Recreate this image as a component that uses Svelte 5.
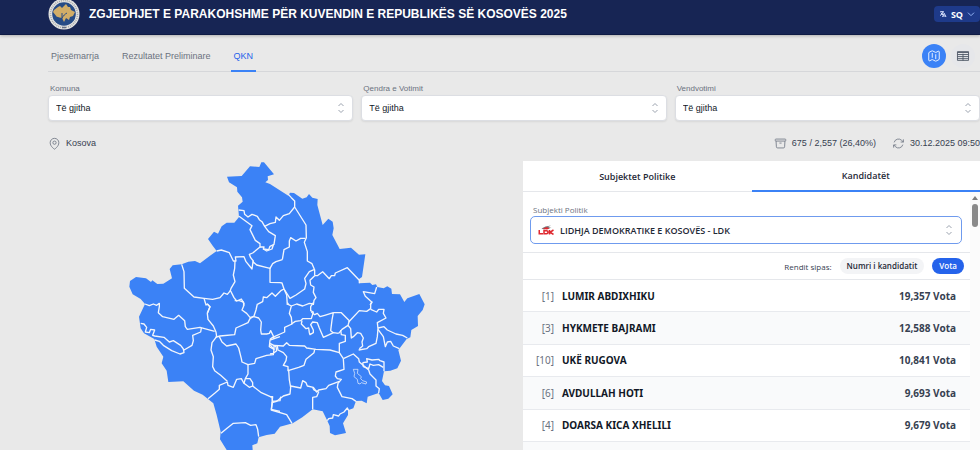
<script>
  const filters = [
    { id: 'komuna', label: 'Komuna' },
    { id: 'qendra', label: 'Qendra e Votimit' },
    { id: 'vendvotimi', label: 'Vendvotimi' },
  ];

  const candidates = [
    { no: 1, name: 'LUMIR ABDIXHIKU', votes: 19357 },
    { no: 3, name: 'HYKMETE BAJRAMI', votes: 12588 },
    { no: 10, name: 'UKË RUGOVA', votes: 10841 },
    { no: 6, name: 'AVDULLAH HOTI', votes: 9693 },
    { no: 4, name: 'DOARSA KICA XHELILI', votes: 9679 },
  ];

  let sortBy = $state('votes');

  const sorted = $derived(
    [...candidates].sort((a, b) => (sortBy === 'votes' ? b.votes - a.votes : a.no - b.no))
  );

  const outline =
    'M424 22L432 22L462 58L443 64L444 75L436 82L450 87L505 122L510 113L522 114L547 131L560 127L567 117L577 128L593 132L592 150L608 210L625 191L638 200L641 220L637 240L659 282L693 278L717 299L736 298L726 366L716 373L718 385L750 383L757 390L768 388L772 396L791 400L802 394L814 401L816 417L840 418L853 441L862 430L898 417L914 448L908 465L893 483L894 513L874 525L871 547L860 552L835 585L843 617L832 640L811 647L792 649L786 678L795 691L807 693L818 718L805 731L788 735L776 714L743 725L740 745L725 737L708 738L700 760L684 766L684 780L669 805L678 834L667 836L645 841L630 834L629 813L622 797L608 769L578 763L547 787L518 805L480 815L464 836L440 840L416 847L412 865L397 871L398 885L390 920L330 920L320 885L300 853L302 830L290 780L280 745L264 732L248 719L222 707L190 679L145 681L140 647L125 625L130 605L110 575L103 552L72 535L62 520L57 485L75 447L62 432L38 418L28 395L30 378L48 366L78 370L93 381L97 376L112 387L130 386L156 370L149 342L158 331L185 328L205 320L225 318L240 325L270 302L290 288L278 272L264 252L282 230L294 236L305 214L320 203L343 203L357 186L354 152L368 140L366 127L352 110L351 97L327 82L321 65L365 63L390 34L418 36Z';

  // municipal borders, one set of lines per quarter of the map
  const borders = [
    {
      x: 0,
      y: 0,
      lines: [
        '356,165 372,167 374,178 384,186 396,178 412,184 418,194 426,200 434,214 450,206 466,202 468,186 478,196 490,182 508,176 524,156',
        '357,184 396,212 390,224 406,256 420,266 420,276 398,294 388,298 392,308 400,318 399,322',
        '434,214 446,230 466,242 462,268 450,274 446,284 430,282 432,276 420,276',
        '430,282 440,288 456,282 460,270',
        '290,288 304,285 328,293 340,318 348,318 346,306 372,305 378,320 396,342 399,320 410,330 438,337 450,340 458,326 468,320 487,314',
        '345,318 344,340 340,360 345,380 333,400 330,410',
        '185,328 192,350 193,400 222,426 252,430 278,433 300,428 312,414 322,418 332,406',
        '252,430 258,450 262,447 270,455 262,475',
        '332,408 342,428 350,438 364,432 372,445 370,452',
        '450,338 450,382 480,383 486,384 492,402 484,406 466,424 456,414 440,428 430,426 428,440 412,448',
      ],
    },
    {
      x: 450,
      y: 0,
      lines: [
        '55,118 64,128 74,138 74,156 108,210 109,248 103,262 112,290 112,318 126,326 134,345 134,362',
        '106,250 92,250 78,258 62,248 58,258 58,276 42,284 37,314',
        '134,362 142,362 158,350 178,371 184,362 194,362 196,354 232,338 268,376 268,385',
        '42,402 60,430 78,420 104,402 108,386 104,370 118,350 132,344',
        '134,362 120,376 122,390 132,396 130,412 138,428 132,436 130,450',
        '42,402 50,420 52,450',
        '320,396 314,416 280,410 286,424 306,442 300,450',
      ],
    },
    {
      x: 0,
      y: 435,
      lines: [
        '75,12 88,17 100,12 110,16 118,10 118,20 115,38 128,50 162,58 176,46 194,62 196,80 202,88 240,82 284,94',
        '262,12 270,20 262,40 264,58 280,78 288,96 290,110 276,128 273,150 280,170 278,200 284,212 302,226 322,244',
        '244,84 242,96 218,106 220,122 216,136 192,150 188,144 182,136 160,122 148,126 132,112 104,108 98,106 104,90 92,88 88,98 76,96 80,82 72,72 62,70',
        '104,120 118,124 130,136 155,152 180,162 192,158 190,146',
        '264,296 284,280 298,268 298,256 322,246 324,256 340,262 350,238 364,236 372,250 388,262 398,258 424,278 456,292 458,304 480,302 482,290',
        '286,112 300,108 344,104 348,84 384,68 390,56 402,48 408,30 412,12',
        '402,50 390,52 380,40 366,30 372,16 370,6 358,2 344,2',
        '298,110 306,126 320,138 348,132 356,144 364,176 366,186 384,194 404,190 408,176 440,166 460,164 462,148 448,140 450,120 480,110',
        '384,194 384,222 376,236 372,250',
        '378,236 390,236 398,248 398,258',
        '402,50 416,54 424,66 422,90 424,102 440,102 448,100 452,92 460,108 462,116',
        '303,400 322,384 340,370 376,368 392,376 408,374 413,388 416,410',
        '458,304 454,328 480,334',
      ],
    },
    {
      x: 450,
      y: 435,
      lines: [
        '52,8 56,14 64,18 58,40 64,52 66,72 44,82 44,96 8,112 0,118',
        '64,18 80,12 98,18 118,10 130,12',
        '64,72 76,64 92,62 98,56 124,56 130,36 122,32 122,20 130,8',
        '96,62 94,72 108,86 116,84 118,98 120,104 130,98 130,90 122,74 128,66 142,68 148,84 160,112 178,104 190,98 206,100',
        '124,36 134,44 142,40 150,50 164,46 190,38 186,60 182,92 190,98',
        '190,38 214,38 238,62 234,76 216,88 206,100',
        '236,66 268,32 290,34 302,26 302,12 306,4',
        '302,28 320,36 326,28 342,28 340,40 348,54 322,68 324,86 322,110 318,130 296,140 290,146 266,150',
        '234,76 242,86 244,114 250,110 262,98 272,100 280,114 276,126 278,138 268,146',
        '212,90 214,104 226,106 226,124 208,130 208,158 220,176',
        '324,84 342,80 352,90 378,102 398,106 412,114',
        '324,88 340,110 346,140 352,126 362,124 370,138 388,146',
        '0,134 12,148 12,136 40,138 50,128 58,136 104,138 110,144 138,148 180,150 208,158',
        '22,138 24,150 40,158 50,170 48,182 40,196 54,200 54,212 86,202 102,196 108,178 132,158 134,148',
        '0,130 18,140 20,152 10,160 0,162',
        '56,210 58,240 62,262 60,282 40,288 20,304 6,308 4,330 50,344 66,370',
        '62,258 92,264 98,242 108,248 112,258 130,262 140,276 146,270 168,266 176,256 208,244',
        '0,290 8,290 6,308',
        '220,176 222,208 198,216 196,228 202,236 214,238 204,250 202,262 216,290 246,296 258,304',
        '220,176 250,162 266,176 268,186 296,210 300,222 318,240 318,258 328,266 326,279',
        '278,188 292,186 290,176 306,180 326,178 330,182 342,186 342,214',
        '278,188 280,200 296,206 300,192 310,196 326,194 340,202',
        '128,262 132,270 146,276 140,290 128,292 128,328',
        '172,362 176,356 188,354 190,344 206,348 210,342 222,336 232,324 236,332',
      ],
    },
  ];
</script>

{#snippet updown()}
  <svg class="updown" viewBox="0 0 10 12" aria-hidden="true">
    <path d="M2.5 4L5 1.5L7.5 4M2.5 8L5 10.5L7.5 8" />
  </svg>
{/snippet}

<div class="page">
  <header class="topbar">
    <div class="topbar-row">
      <svg class="seal" viewBox="0 0 32 32" aria-hidden="true">
        <circle cx="16" cy="16" r="15.5" fill="#e4e4e2" />
        <circle cx="16" cy="16" r="13.5" fill="none" stroke="#a5a7ab" stroke-width="1.6" stroke-dasharray="1 1" />
        <circle cx="16" cy="16" r="11.8" fill="#264b86" />
        <path
          d="M6 12L10 9L12 8L14 10L18 6L20 9L22 9L23 12L27 14L25 18L22 19L21 22L18 20L16 24L14 20L9 19L5 14Z"
          fill="#d2ad67"
        />
        <path d="M13 27C12 22 15 17 19 15M13 22L9 19M14 20L14 15" fill="none" stroke="#264b86" />
        <path d="M14 29.5H18" stroke="#667188" stroke-width="1.5" />
      </svg>
      <h1>ZGJEDHJET E PARAKOHSHME PËR KUVENDIN E REPUBLIKËS SË KOSOVËS 2025</h1>
      <button class="lang" type="button">
        <svg class="lang-icon" viewBox="0 0 24 24" aria-hidden="true">
          <path d="M10.5 21l5.2-11.2L21 21M12 18h7.5M3 5.6a48 48 0 0 1 12 0M9 5.2V3M12.4 5.5A18 18 0 0 1 3 16.5M6.5 9a18 18 0 0 0 5.5 6" />
        </svg>
        SQ
        <svg class="lang-arrow" viewBox="0 0 24 24" aria-hidden="true"><path d="m3 8 9 9 9-9" /></svg>
      </button>
    </div>
  </header>

  <main>
    <div class="nav-row">
      <nav>
        <a href="#pjesemarrja">Pjesëmarrja</a>
        <a href="#rezultatet">Rezultatet Preliminare</a>
        <a class="active" href="#qkn">QKN</a>
      </nav>
      <div class="views">
        <button class="view on" type="button" aria-label="Harta">
          <svg viewBox="0 0 24 24" aria-hidden="true">
            <path
              d="M9 6.75V15m6-6v8.25m.5 3.5 4.9-2.44c.38-.19.6-.57.6-1V4.8c0-.83-.88-1.38-1.63-1L15.5 5.75c-.3.16-.68.16-1 0L9.5 3.25a1.1 1.1 0 0 0-1 0L3.6 5.7c-.38.18-.6.57-.6 1V19.2c0 .83.88 1.37 1.63 1l3.87-1.95c.3-.16.68-.16 1 0l5 2.5c.3.15.68.15 1 0Z"
            />
          </svg>
        </button>
        <button class="view" type="button" aria-label="Tabela">
          <svg viewBox="0 0 24 24" aria-hidden="true">
            <path d="M2.5 4.5h19v15h-19ZM2.5 6h19M2.5 9.5h19M2.5 13h19M2.5 16.5h19M12 8v12" />
          </svg>
        </button>
      </div>
    </div>

    <div class="filters">
      {#each filters as f}
        <div class="filter">
          <label for={f.id}>{f.label}</label>
          <div class="select-box">
            <select id={f.id}>
              <option>Të gjitha</option>
            </select>
            {@render updown()}
          </div>
        </div>
      {/each}
    </div>

    <div class="status">
      <span class="status-item place">
        <svg viewBox="0 0 24 24" aria-hidden="true">
          <path d="M15 10.5a3 3 0 1 1-6 0 3 3 0 0 1 6 0Z" />
          <path d="M20 10.5c0 7.1-8 12-8 12s-8-4.9-8-12a8 8 0 0 1 16 0Z" />
        </svg>
        Kosova
      </span>
      <span class="status-item">
        <svg viewBox="0 0 24 24" aria-hidden="true">
          <path d="m20.2 7.5-.6 10.6a2.2 2.2 0 0 1-2.3 2.1H6.7a2.2 2.2 0 0 1-2.3-2.1L3.8 7.5M10 11.2h4M3.4 7.5h17.2c.6 0 1.1-.5 1.1-1.1V4.9c0-.6-.5-1.1-1.1-1.1H3.4c-.6 0-1.1.5-1.1 1.1v1.5c0 .6.5 1.1 1.1 1.1Z" />
        </svg>
        675 / 2,557 (26,40%)
      </span>
      <span class="status-item">
        <svg viewBox="0 0 24 24" aria-hidden="true">
          <path d="M16 9.3h5V4.4M3 19.6v-5h5M3 14.6l3.2 3.2a8.2 8.2 0 0 0 13.8-3.7M4 9.9A8.2 8.2 0 0 1 17.8 6.2L21 9.3" />
        </svg>
        30.12.2025 09:50
      </span>
    </div>

    <div class="results">
      <svg class="map" viewBox="-216 18 1371 900" role="img" aria-label="Kosova">
        <path class="land" d={outline} />
        {#each borders as part}
          <g transform="translate({part.x} {part.y})">
            {#each part.lines as line}
              <polyline class="border" points={line} />
            {/each}
          </g>
        {/each}
        <polygon
          class="border thin"
          points="700,643 714,643 712,655 724,665 722,671 728,677 740,681 738,687 724,683 720,687 714,685 712,673 702,665 704,655"
        />
      </svg>

      <section class="panel">
        <div class="panel-tabs" role="tablist">
          <button type="button" role="tab" aria-selected="false">Subjektet Politike</button>
          <button class="active" type="button" role="tab" aria-selected="true">Kandidatët</button>
        </div>
        <div class="panel-body">
          <div class="panel-content">
            <div class="party">
              <label for="party">Subjekti Politik</label>
              <div class="party-box">
                <svg class="ldk" viewBox="0 0 32 20" aria-hidden="true">
                  <path d="M7 7L15 3L26 1L20 4L27 5L21 6L25 8L17 7L12 9Z" fill="#77777b" />
                  <path d="M9 8L17 4L23 7L18 9Z" fill="#df2930" />
                  <path
                    d="M2.5 10V17.5H10M12 11.5H17Q20 11.5 20 14Q20 17.5 17 17.5H12ZM23 10V19M31 10L24 14.5L31 19"
                    fill="none"
                    stroke="#df2930"
                    stroke-width="3"
                  />
                </svg>
                <select id="party">
                  <option>LIDHJA DEMOKRATIKE E KOSOVËS - LDK</option>
                </select>
                {@render updown()}
              </div>
            </div>
            <div class="sort">
              <span>Rendit sipas:</span>
              <button type="button" class:on={sortBy === 'number'} onclick={() => (sortBy = 'number')}>
                Numri i kandidatit
              </button>
              <button type="button" class:on={sortBy === 'votes'} onclick={() => (sortBy = 'votes')}>
                Vota
              </button>
            </div>
            <ul class="list">
              {#each sorted as c (c.no)}
                <li>
                  <span class="no">[{c.no}]</span>
                  <span class="name">{c.name}</span>
                  <span class="votes">{c.votes.toLocaleString('en-US')} Vota</span>
                </li>
              {/each}
            </ul>
          </div>
          <div class="scrollbar" aria-hidden="true">
            <span class="scroll-up"></span>
            <span class="thumb"></span>
          </div>
        </div>
      </section>
    </div>
  </main>
</div>

<style>
  :global(body) {
    background: #e9e9e9;
    font-family: 'Liberation Sans', Arial, sans-serif;
    color: #374151;
  }

  .page {
    display: flex;
    flex-direction: column;
    height: 100vh;
    overflow: hidden;
  }

  button,
  select {
    font-family: inherit;
    border: 0;
    margin: 0;
    cursor: pointer;
  }

  svg {
    flex: none;
  }

  .topbar {
    background: #172554;
    border-bottom: 1px solid #0f1b45;
    box-shadow: 0 1px 3px rgba(0, 0, 0, 0.25);
    padding: 0 0 6px 48px;
  }

  .topbar-row {
    display: flex;
    align-items: center;
    height: 28px;
  }

  .seal {
    width: 32px;
    height: 32px;
  }

  h1 {
    flex: 1;
    margin: 0 0 0 9px;
    color: #fff;
    font-size: 12px;
    font-weight: 700;
    white-space: nowrap;
  }

  .lang {
    display: flex;
    align-items: center;
    gap: 4px;
    height: 16px;
    padding: 0 5px;
    border-radius: 4px;
    background: #1e3a8a;
    color: #fff;
    font-family: 'Open Sans', 'Noto Sans', sans-serif;
    font-size: 9px;
    font-weight: 700;
  }

  .lang-icon,
  .lang-arrow {
    width: 8px;
    height: 8px;
    fill: none;
    stroke: #dbe4ff;
    stroke-width: 3;
  }

  .lang-arrow {
    stroke: #93b4f5;
  }

  main {
    flex: 1;
    min-height: 0;
    overflow: hidden;
    padding: 6px 0 0 48px;
  }

  .nav-row {
    display: flex;
    justify-content: space-between;
    border-bottom: 1px solid #d6d7da;
    height: 30px;
  }

  nav {
    display: flex;
    gap: 17px;
  }

  nav a {
    height: 29px;
    padding: 0 3px;
    border-bottom: 2px solid transparent;
    color: #6b7280;
    font-size: 9px;
    line-height: 30px;
    text-decoration: none;
  }

  nav a.active {
    color: #2563eb;
    border-color: #3b82f6;
  }

  .views {
    display: flex;
    gap: 5px;
    padding: 3px 5px 0 0;
  }

  .view {
    display: grid;
    place-items: center;
    width: 24px;
    height: 24px;
    padding: 0;
    border-radius: 50%;
    background: #e6e7ea;
  }

  .view svg {
    width: 14px;
    height: 14px;
    fill: none;
    stroke: #4b5563;
    stroke-width: 1.5;
  }

  .view.on {
    background: #3b82f6;
  }

  .view.on svg {
    stroke: #fff;
  }

  .filters {
    display: grid;
    grid-template-columns: repeat(3, 1fr);
    gap: 8px;
    padding-top: 11px;
  }

  .filter label {
    display: block;
    padding-left: 2px;
    color: #6b7280;
    font-size: 8px;
    line-height: 12px;
  }

  .select-box {
    display: flex;
    align-items: center;
    height: 24px;
    padding-right: 6px;
    border: 1px solid #dcdee3;
    border-radius: 4px;
    background: #fff;
    box-shadow: 0 1px 2px rgba(0, 0, 0, 0.08);
  }

  select {
    appearance: none;
    flex: 1;
    min-width: 0;
    height: 100%;
    padding: 0 7px;
    background: transparent;
    color: #111827;
    font-size: 9px;
    outline: none;
  }

  .updown {
    width: 10px;
    height: 12px;
    fill: none;
    stroke: #9ca3af;
  }

  .status {
    display: flex;
    align-items: center;
    gap: 16px;
    height: 16px;
    padding: 14px 0 10px;
    font-size: 9px;
    white-space: nowrap;
  }

  .status-item {
    display: flex;
    align-items: center;
    gap: 5px;
  }

  .status-item svg {
    width: 13px;
    height: 13px;
    fill: none;
    stroke: #6b7280;
    stroke-width: 1.5;
  }

  .place {
    flex: 1;
  }

  .results {
    display: grid;
    grid-template-columns: 1fr 1fr;
    gap: 18px;
    align-items: start;
  }

  .map {
    display: block;
    width: 100%;
  }

  .land {
    fill: #3b82f6;
  }

  .border {
    fill: none;
    stroke: #f3f6fc;
    stroke-width: 4;
    stroke-linejoin: round;
  }

  .thin {
    stroke-width: 2;
  }

  .panel {
    background: #fff;
    font-family: 'Open Sans', 'Noto Sans', sans-serif;
  }

  .panel-tabs {
    display: grid;
    grid-template-columns: 1fr 1fr;
  }

  .panel-tabs button {
    height: 31px;
    padding: 0;
    background: none;
    border-bottom: 1px solid #e5e7eb;
    color: #1f2937;
    font-size: 9px;
    font-weight: 600;
  }

  .panel-tabs .active {
    border-bottom: 2px solid #3b82f6;
  }

  .panel-body {
    display: flex;
  }

  .panel-content {
    flex: 1;
    min-width: 0;
  }

  .party {
    padding: 12px 8px 8px 7px;
    border-bottom: 1px solid #e5e7eb;
  }

  .party label {
    display: block;
    padding-left: 3px;
    color: #6b7280;
    font-size: 8px;
    line-height: 12px;
  }

  .party-box {
    display: flex;
    align-items: center;
    height: 26px;
    padding: 0 7px;
    border: 1px solid #6f9bee;
    border-radius: 5px;
  }

  .ldk {
    width: 16px;
    height: 10px;
  }

  .party-box select {
    padding: 0 6px;
    color: #1f2937;
    font-size: 9px;
    font-weight: 600;
  }

  .sort {
    display: flex;
    align-items: center;
    justify-content: flex-end;
    gap: 8px;
    height: 26px;
    padding-right: 6px;
    border-bottom: 1px solid #e5e7eb;
    color: #374151;
    font-size: 8px;
    font-weight: 500;
  }

  .sort button {
    height: 16px;
    padding: 0 7px;
    border-radius: 8px;
    background: #f3f4f6;
    color: #1f2937;
    font-size: 8px;
    font-weight: 600;
    line-height: 16px;
  }

  .sort button.on {
    background: #2563eb;
    color: #fff;
  }

  .list {
    display: grid;
    grid-auto-rows: 1fr;
    height: 162px;
    margin: 0;
    padding: 0 0 32px;
    background: #f9fafb;
    font-family: 'Noto Sans', sans-serif;
    list-style: none;
  }

  .list li {
    display: flex;
    align-items: center;
    gap: 8px;
    padding: 0 14px 0 13px;
    border-bottom: 1px solid #e8eaee;
    background: #fff;
    font-size: 10px;
  }

  .list li:nth-child(even) {
    background: #f9fafb;
  }

  .no {
    width: 18px;
    display: flex;
    justify-content: flex-end;
    color: #6b7280;
  }

  .name {
    flex: 1;
    color: #111827;
    font-weight: 700;
  }

  .votes {
    color: #374151;
    font-weight: 700;
  }

  .scrollbar {
    display: flex;
    flex-direction: column;
    align-items: center;
    gap: 4px;
    width: 10px;
    padding-top: 4px;
    background: #fbfbfb;
  }

  .scroll-up {
    border: 3px solid transparent;
    border-top: 0;
    border-bottom: 4px solid #7d7d7d;
  }

  .thumb {
    width: 6px;
    height: 23px;
    border-radius: 3px;
    background: #8a8a8a;
  }
</style>
